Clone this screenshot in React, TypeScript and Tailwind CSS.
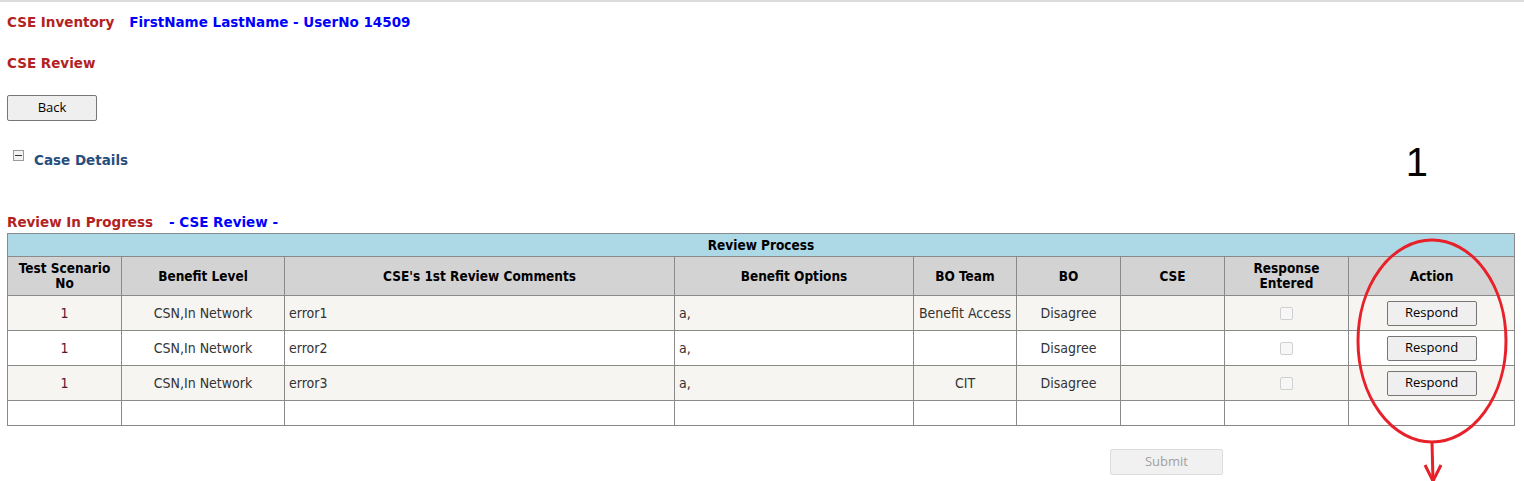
import React from "react";

const rows = [
  { no: "1", level: "CSN,In Network", comment: "error1", option: "a,", team: "Benefit Access", bo: "Disagree", bg: "bg-[#f6f5f2]" },
  { no: "1", level: "CSN,In Network", comment: "error2", option: "a,", team: "", bo: "Disagree", bg: "bg-white" },
  { no: "1", level: "CSN,In Network", comment: "error3", option: "a,", team: "CIT", bo: "Disagree", bg: "bg-[#f6f5f2]" },
];

const cell = "border border-[#8a8a8a] px-[4px]";

const App = () => {
  return (
    <div className="relative min-h-[481px] w-full bg-white border-t-2 border-[#dcdcdc] font-['Verdana','DejaVu_Sans',sans-serif]">
      {/* Title */}
      <div className="pl-[7px] pt-[11px] h-[20px] flex items-center gap-[15px] text-[13.5px] font-bold leading-none box-content">
        <span className="text-[#b22222]">CSE Inventory</span>
        <span className="text-[#0000ff]">FirstName LastName - UserNo 14509</span>
      </div>

      <div className="pl-[7px] mt-[24px] text-[13.5px] font-bold leading-none text-[#b22222]">CSE Review</div>

      <div className="pl-[7px] mt-[24px]">
        <button className="w-[90px] h-[26px] bg-[#efefef] border border-[#767676] rounded-[2px] text-[13px] text-black font-['Open_Sans',sans-serif]">
          Back
        </button>
      </div>

      {/* Case Details */}
      <div className="mt-[22px] flex items-start justify-between pr-[96px]">
        <div className="flex items-center pl-[13px] pt-[1px]">
          <span className="w-[11px] h-[11px] border border-[#9a9a9a] bg-[#f3f3f3] flex items-center justify-center">
            <span className="w-[7px] h-[1.5px] bg-[#333]" />
          </span>
          <span className="ml-[10px] mt-[10px] text-[13.5px] font-bold text-[#274f7e] leading-none">Case Details</span>
        </div>
        <span className="-mt-[1px] text-[40px] leading-none text-black font-['Liberation_Sans',sans-serif]">1</span>
      </div>

      {/* Review status */}
      <div className="pl-[7px] mt-[34px] flex items-center text-[13.5px] font-bold leading-none">
        <span className="text-[#b22222]">Review In Progress</span>
        <span className="ml-[16px] text-[#0000ff]">- CSE Review -</span>
      </div>

      {/* Table */}
      <div className="pl-[7px] mt-[4px] pr-[10px]">
        <table className="table-fixed border-collapse w-[1507px] text-[14px] font-['DejaVu_Sans_Condensed','DejaVu_Sans',sans-serif] text-[#333]">
          <colgroup>
            <col className="w-[114px]" />
            <col className="w-[163px]" />
            <col className="w-[390px]" />
            <col className="w-[239px]" />
            <col className="w-[103px]" />
            <col className="w-[104px]" />
            <col className="w-[104px]" />
            <col className="w-[124px]" />
            <col className="w-[166px]" />
          </colgroup>
          <thead className="text-[13.5px]">
            <tr className="h-[23px] bg-[#add8e6]">
              <th colSpan={9} className={`${cell} font-bold text-black text-center`}>Review Process</th>
            </tr>
            <tr className="h-[39px] bg-[#d3d3d3] text-black">
              <th className={`${cell} leading-[15px]`}>Test Scenario<br />No</th>
              <th className={cell}>Benefit Level</th>
              <th className={cell}>CSE's 1st Review Comments</th>
              <th className={cell}>Benefit Options</th>
              <th className={cell}>BO Team</th>
              <th className={cell}>BO</th>
              <th className={cell}>CSE</th>
              <th className={`${cell} leading-[15px]`}>Response<br />Entered</th>
              <th className={cell}>Action</th>
            </tr>
          </thead>
          <tbody>
            {rows.map((r, i) => (
              <tr key={i} className={`h-[35px] ${r.bg}`}>
                <td className={`${cell} text-center text-[#5a1630]`}>{r.no}</td>
                <td className={`${cell} text-center`}>{r.level}</td>
                <td className={cell}>{r.comment}</td>
                <td className={cell}>{r.option}</td>
                <td className={`${cell} text-center`}>{r.team}</td>
                <td className={`${cell} text-center`}>{r.bo}</td>
                <td className={cell}></td>
                <td className={`${cell} text-center`}>
                  <span className="inline-block align-middle w-[13px] h-[13px] border border-[#d0d0d0] rounded-[2px] bg-[#f7f7f7]" />
                </td>
                <td className={`${cell} text-center`}>
                  <button className="w-[90px] h-[25px] bg-[#efefef] border border-[#767676] rounded-[2px] text-[13px] text-black font-['Open_Sans',sans-serif]">
                    Respond
                  </button>
                </td>
              </tr>
            ))}
            <tr className="h-[25px] bg-white">
              {Array.from({ length: 9 }).map((_, i) => (
                <td key={i} className={cell}></td>
              ))}
            </tr>
          </tbody>
        </table>
      </div>

      {/* Submit */}
      <div className="mt-[23px] pl-[1110px]">
        <button disabled className="w-[113px] h-[26px] bg-[#f1f1f1] border border-[#dcdcdc] rounded-[2px] text-[13px] text-[#a0a0a0] font-['Open_Sans',sans-serif]">
          Submit
        </button>
      </div>

      {/* Red annotation */}
      <svg className="absolute left-0 top-0 pointer-events-none" width="1524" height="481" viewBox="0 0 1524 481">
        <ellipse cx="1432" cy="339" rx="74" ry="101" fill="none" stroke="#e8202a" strokeWidth="3" />
        <path d="M1432 440 L1433 479" stroke="#e8202a" strokeWidth="3" fill="none" />
        <path d="M1425 463 L1433 479 L1441 463" stroke="#e8202a" strokeWidth="3" fill="none" />
      </svg>
    </div>
  );
};

export default App;
